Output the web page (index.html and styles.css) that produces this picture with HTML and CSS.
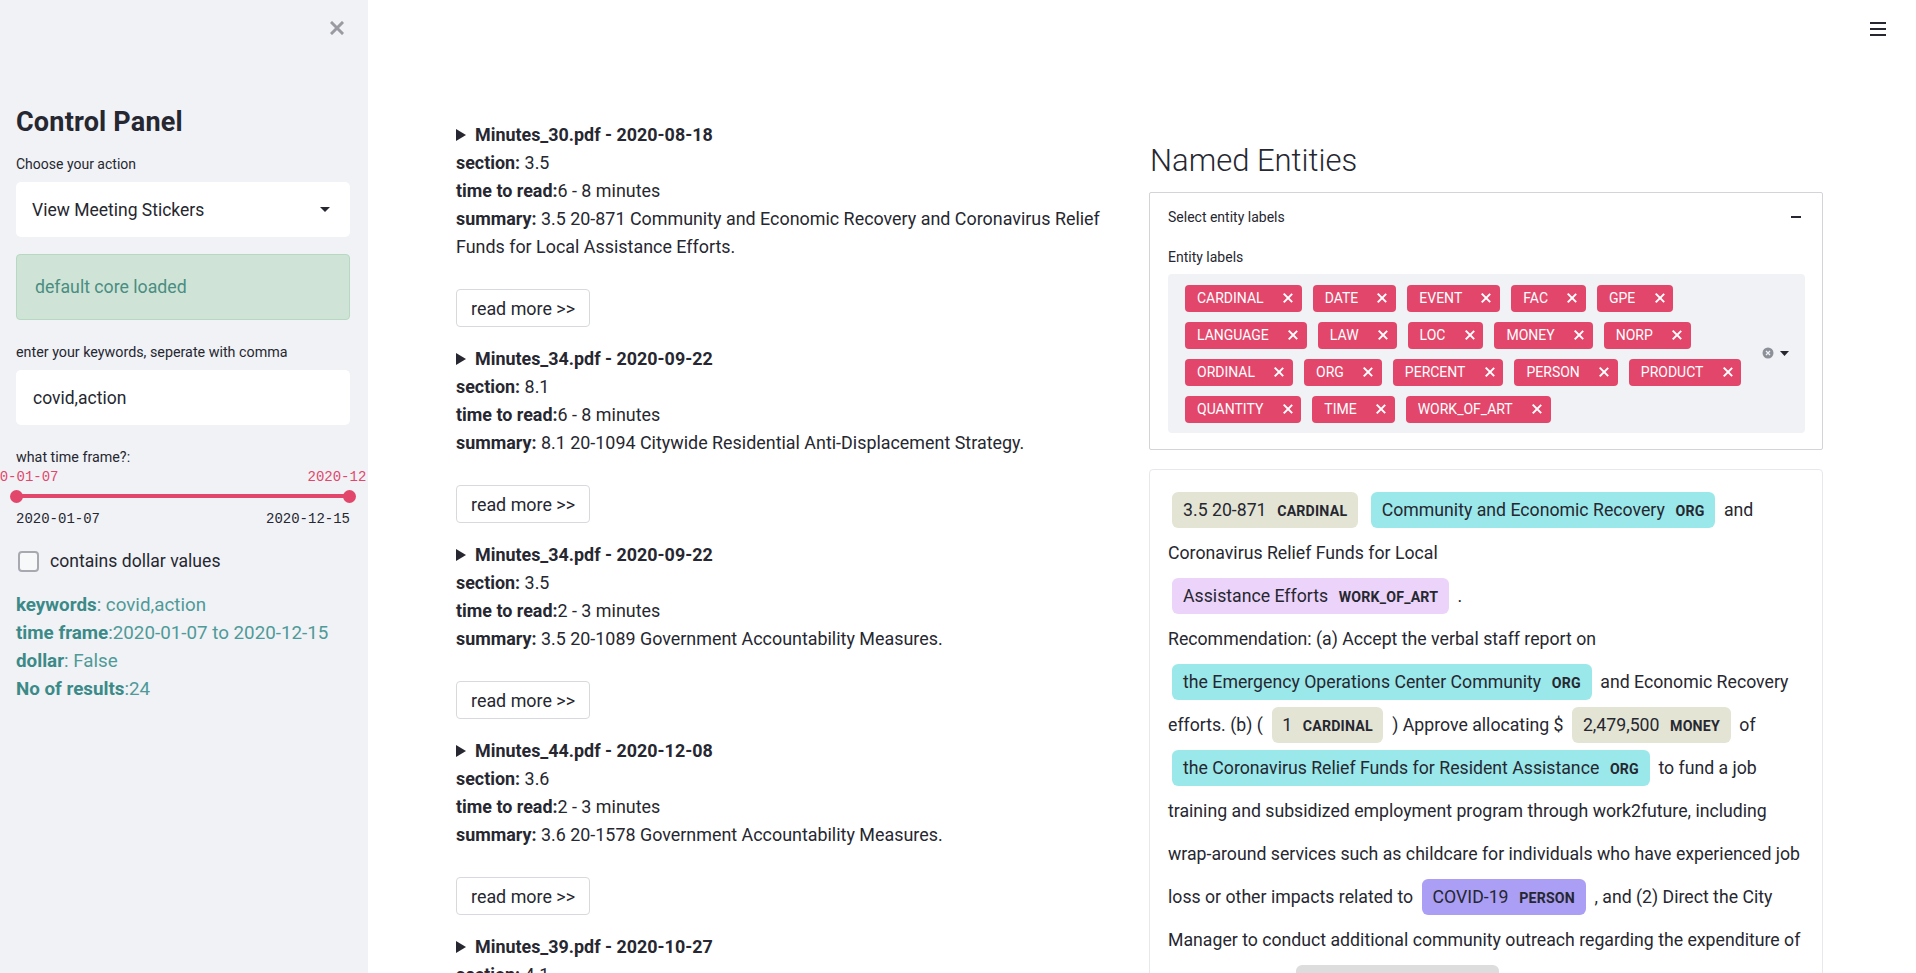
FILE: index.html
```html
<!DOCTYPE html>
<html lang="en">
<head>
<meta charset="utf-8">
<title>Meeting Stickers</title>
<link rel="stylesheet" href="styles.css">
</head>
<body>
<aside class="sidebar">
  <div class="sb-top">
    <svg class="close" width="14" height="14" viewBox="0 0 14 14"><path d="M2 2L12 12M12 2L2 12" stroke="#9a9ba2" stroke-width="3" stroke-linecap="square"/></svg>
  </div>
  <h1 class="sb-title">Control Panel</h1>
  <div class="sb-label first">Choose your action</div>
  <div class="select">
    <span>View Meeting Stickers</span>
    <svg width="10" height="6" viewBox="0 0 10 6"><path d="M0 0H10L5 5Z" fill="#262730"/></svg>
  </div>
  <div class="alert">default core loaded</div>
  <div class="sb-label">enter your keywords, seperate with comma</div>
  <div class="textinput">covid,action</div>
  <div class="sb-label">what time frame?:</div>
  <div class="slider">
    <div class="track">
      <span class="thumb thumb-l"><span class="thumb-val">2020-01-07</span></span>
      <span class="thumb thumb-r"><span class="thumb-val">2020-12-15</span></span>
    </div>
    <div class="range-ends"><span>2020-01-07</span><span>2020-12-15</span></div>
  </div>
  <div class="check"><span class="box"></span><span>contains dollar values</span></div>
  <div class="info">
    <div><b>keywords</b>: covid,action</div>
    <div><b>time frame</b>:2020-01-07 to 2020-12-15</div>
    <div><b>dollar</b>: False</div>
    <div><b>No of results</b>:24</div>
  </div>
</aside>
<main class="main">
  <div class="toolbar">
    <svg width="16" height="14" viewBox="0 0 16 14"><rect x="0" y="0" width="16" height="2" fill="#262730"/><rect x="0" y="6" width="16" height="2" fill="#262730"/><rect x="0" y="12" width="16" height="2" fill="#262730"/></svg>
  </div>
  <div class="cols">
    <section class="results">
      <div class="item">
        <div class="item-head"><span class="tri"></span>Minutes_30.pdf - 2020-08-18</div>
        <div><b>section:</b> 3.5</div>
        <div><b>time to read:</b>6 - 8 minutes</div>
        <div><b>summary:</b> 3.5 20-871 Community and Economic Recovery and Coronavirus Relief Funds for Local Assistance Efforts.</div>
        <button class="btn">read more &gt;&gt;</button>
      </div>
      <div class="item">
        <div class="item-head"><span class="tri"></span>Minutes_34.pdf - 2020-09-22</div>
        <div><b>section:</b> 8.1</div>
        <div><b>time to read:</b>6 - 8 minutes</div>
        <div><b>summary:</b> 8.1 20-1094 Citywide Residential Anti-Displacement Strategy.</div>
        <button class="btn">read more &gt;&gt;</button>
      </div>
      <div class="item">
        <div class="item-head"><span class="tri"></span>Minutes_34.pdf - 2020-09-22</div>
        <div><b>section:</b> 3.5</div>
        <div><b>time to read:</b>2 - 3 minutes</div>
        <div><b>summary:</b> 3.5 20-1089 Government Accountability Measures.</div>
        <button class="btn">read more &gt;&gt;</button>
      </div>
      <div class="item">
        <div class="item-head"><span class="tri"></span>Minutes_44.pdf - 2020-12-08</div>
        <div><b>section:</b> 3.6</div>
        <div><b>time to read:</b>2 - 3 minutes</div>
        <div><b>summary:</b> 3.6 20-1578 Government Accountability Measures.</div>
        <button class="btn">read more &gt;&gt;</button>
      </div>
      <div class="item">
        <div class="item-head"><span class="tri"></span>Minutes_39.pdf - 2020-10-27</div>
        <div><b>section:</b> 4.1</div>
      </div>
    </section>
    <section class="ner">
      <h2 class="ner-title">Named Entities</h2>
      <div class="expander">
        <div class="exp-head"><span>Select entity labels</span><span class="minus"></span></div>
        <div class="exp-label">Entity labels</div>
        <div class="multi">
          <div class="tags">
            <span class="tag">CARDINAL<i class="x"></i></span>
            <span class="tag">DATE<i class="x"></i></span>
            <span class="tag">EVENT<i class="x"></i></span>
            <span class="tag">FAC<i class="x"></i></span>
            <span class="tag">GPE<i class="x"></i></span>
            <span class="tag">LANGUAGE<i class="x"></i></span>
            <span class="tag">LAW<i class="x"></i></span>
            <span class="tag">LOC<i class="x"></i></span>
            <span class="tag">MONEY<i class="x"></i></span>
            <span class="tag">NORP<i class="x"></i></span>
            <span class="tag">ORDINAL<i class="x"></i></span>
            <span class="tag">ORG<i class="x"></i></span>
            <span class="tag">PERCENT<i class="x"></i></span>
            <span class="tag">PERSON<i class="x"></i></span>
            <span class="tag">PRODUCT<i class="x"></i></span>
            <span class="tag">QUANTITY<i class="x"></i></span>
            <span class="tag">TIME<i class="x"></i></span>
            <span class="tag">WORK_OF_ART<i class="x"></i></span>
          </div>
          <div class="multi-icons">
            <svg width="12" height="12" viewBox="0 0 12 12"><circle cx="6" cy="6" r="5.5" fill="#8e9099"/><path d="M4 4L8 8M8 4L4 8" stroke="#f0f2f6" stroke-width="1.3"/></svg>
            <svg width="9" height="5" viewBox="0 0 9 5"><path d="M0 0H9L4.5 5Z" fill="#262730"/></svg>
          </div>
        </div>
      </div>
      <div class="displacy">
        <mark class="ent cardinal">3.5 20-871<span class="lbl">CARDINAL</span></mark> <mark class="ent org">Community and Economic Recovery<span class="lbl">ORG</span></mark> and<br>
        Coronavirus Relief Funds for Local<br>
        <mark class="ent woa">Assistance Efforts<span class="lbl">WORK_OF_ART</span></mark> .<br>
        Recommendation: (a) Accept the verbal staff report on<br>
        <mark class="ent org">the Emergency Operations Center Community<span class="lbl">ORG</span></mark> and Economic Recovery<br>
        efforts. (b) ( <mark class="ent cardinal">1<span class="lbl">CARDINAL</span></mark> ) Approve allocating $ <mark class="ent money">2,479,500<span class="lbl">MONEY</span></mark> of<br>
        <mark class="ent org">the Coronavirus Relief Funds for Resident Assistance<span class="lbl">ORG</span></mark> to fund a job<br>
        training and subsidized employment program through work2future, including<br>
        wrap-around services such as childcare for individuals who have experienced job<br>
        loss or other impacts related to <mark class="ent person">COVID-19<span class="lbl">PERSON</span></mark> , and (2) Direct the City<br>
        Manager to conduct additional community outreach regarding the expenditure of<br>
        these funds for <mark class="ent other">Coronavirus Relief<span class="lbl">GPE</span></mark>
      </div>
    </section>
  </div>
</main>
</body>
</html>
```
FILE: styles.css
```css
* { box-sizing: border-box; }
html, body { margin: 0; padding: 0; }
body {
  display: flex;
  width: 1916px;
  height: 973px;
  overflow: hidden;
  background: #fff;
  color: #262730;
  font-family: Roboto, "Liberation Sans", sans-serif;
}

/* ---------- sidebar ---------- */
.sidebar {
  width: 368px;
  flex: 0 0 368px;
  height: 973px;
  background: #f0f2f6;
  padding: 0 18px 0 16px;
  display: flex;
  flex-direction: column;
  overflow: hidden;
}
.sb-top {
  height: 56px;
  display: flex;
  justify-content: flex-end;
  align-items: center;
  padding-right: 6px;
}
.sb-title {
  margin: 51px 0 0;
  font-size: 27px;
  line-height: 30px;
  font-weight: 700;
  letter-spacing: 0.2px;
}
.sb-label {
  margin-top: 22px;
  font-size: 14.3px;
  line-height: 20px;
}
.sb-label.first { margin-top: 17px; font-size: 14px; }
.select, .textinput {
  margin-top: 8px;
  height: 55px;
  background: #fff;
  border-radius: 5px;
  font-size: 17.5px;
  display: flex;
  align-items: center;
  padding: 0 20px 0 16px;
}
.select { justify-content: space-between; }
.textinput { padding-left: 17px; }
.alert {
  margin-top: 17px;
  height: 66px;
  background: #cfe4d6;
  border: 1px solid #b7d9c2;
  border-radius: 4px;
  color: #4a8d82;
  font-size: 17.7px;
  display: flex;
  align-items: center;
  padding-left: 18px;
}
.slider { margin-top: 0; padding-top: 20px; }
.track {
  position: relative;
  height: 18px;
  margin: 0;
}
.track::before {
  content: "";
  position: absolute;
  left: 0; right: 0; top: 7px;
  height: 4px;
  background: #e2476b;
}
.thumb {
  position: absolute;
  top: 3px;
  width: 13px;
  height: 13px;
  border-radius: 50%;
  background: #e2476b;
}
.thumb-l { left: -6px; }
.thumb-r { right: -6px; }
.thumb-val {
  position: absolute;
  top: -21px;
  left: 50%;
  transform: translateX(-50%);
  font-family: "Liberation Mono", "DejaVu Sans Mono", monospace;
  font-size: 14px;
  line-height: 16px;
  color: #e2476b;
  white-space: nowrap;
}
.range-ends {
  margin-top: 5px;
  display: flex;
  justify-content: space-between;
  font-family: "Liberation Mono", "DejaVu Sans Mono", monospace;
  font-size: 14px;
  line-height: 18px;
}
.check {
  margin-top: 22px;
  height: 22px;
  display: flex;
  align-items: center;
  font-size: 17.6px;
}
.check .box {
  width: 21px;
  height: 21px;
  margin-left: 2px;
  margin-right: 11px;
  border: 2px solid #a8a9b0;
  border-radius: 4px;
  background: #f7f8fa;
}
.info {
  margin-top: 19px;
  font-size: 18.8px;
  line-height: 28px;
  color: #4f9a98;
}
.info b { color: #3b8a88; font-weight: 700; }

/* ---------- main ---------- */
.main {
  flex: 1;
  height: 973px;
  overflow: hidden;
  font-family: Roboto, "Liberation Sans", sans-serif;
}
.toolbar {
  display: flex;
  justify-content: flex-end;
  padding: 22px 30px 0 0;
  height: 36px;
}
.cols {
  margin-top: 85px;
  padding-left: 88px;
  display: grid;
  grid-template-columns: 674px 674px;
  column-gap: 19px;
  align-items: start;
}
.results {
  font-size: 17.9px;
  line-height: 28px;
}
.results b { font-weight: 700; }
.item + .item { margin-top: 18px; }
.item-head {
  font-weight: 700;
  display: flex;
  align-items: center;
}
.tri {
  width: 0; height: 0;
  border-top: 6px solid transparent;
  border-bottom: 6px solid transparent;
  border-left: 10px solid #262730;
  margin-right: 9px;
}
.btn {
  display: block;
  margin-top: 28px;
  height: 38px;
  width: 134px;
  padding: 0 0 0 14px;
  text-align: left;
  white-space: nowrap;
  background: #fff;
  border: 1px solid #d8d9de;
  border-radius: 4px;
  font-family: inherit;
  font-size: 17.9px;
  color: #262730;
}

/* ---------- named entities ---------- */
.ner-title {
  margin: 20px 0 0;
  font-size: 31px;
  line-height: 40px;
  font-weight: 300;
  color: #262730;
  padding-left: 1px;
}
.expander {
  margin-top: 11px;
  border: 1px solid #d3d4d8;
  border-radius: 2px;
  padding: 0 17px 16px 18px;
}
.exp-head {
  height: 48px;
  display: flex;
  align-items: center;
  justify-content: space-between;
  font-size: 14px;
}
.minus {
  width: 10px;
  height: 2px;
  background: #262730;
  margin-right: 4px;
}
.exp-label {
  margin-top: 7px;
  font-size: 14px;
  line-height: 18px;
}
.multi {
  margin-top: 8px;
  height: 159px;
  background: #f0f2f6;
  border-radius: 4px;
  display: flex;
  align-items: center;
  padding: 10px 16px 10px 17px;
}
.tags {
  flex: 1;
  display: flex;
  flex-wrap: wrap;
  gap: 10px 11px;
  align-content: center;
}
.tag {
  height: 27px;
  background: #e2476b;
  color: #fff;
  border-radius: 4px;
  font-size: 14px;
  display: flex;
  align-items: center;
  padding: 0 9px 0 12px;
}
.x {
  display: block;
  width: 10px;
  height: 10px;
  margin-left: 19px;
  position: relative;
}
.x::before, .x::after {
  content: "";
  position: absolute;
  left: 4.2px;
  top: -1px;
  width: 1.7px;
  height: 12px;
  background: #fff;
  transform: rotate(45deg);
}
.x::after { transform: rotate(-45deg); }
.multi-icons {
  margin-left: 8px;
  display: flex;
  align-items: center;
  gap: 6px;
  margin-top: -1px;
}

.displacy {
  margin-top: 19px;
  border: 1px solid #e6e8ec;
  border-radius: 4px;
  padding: 19px 17px 20px 18px;
  font-size: 17.7px;
  line-height: 43px;
  white-space: nowrap;
  color: #262730;
}
.ent {
  color: #262730;
  padding: 0.45em 0.6em;
  margin: 0 0.25em;
  line-height: 1;
  border-radius: 0.35em;
}
.lbl {
  font-size: 0.8em;
  font-weight: 700;
  line-height: 1;
  vertical-align: middle;
  margin-left: 0.75em;
  letter-spacing: 0.2px;
}
.cardinal, .money { background: #e3e4d4; }
.org { background: #9ae8ea; }
.woa { background: #ecd3fa; }
.person { background: #aa9ff5; }
.other { background: #dddddd; }
```
